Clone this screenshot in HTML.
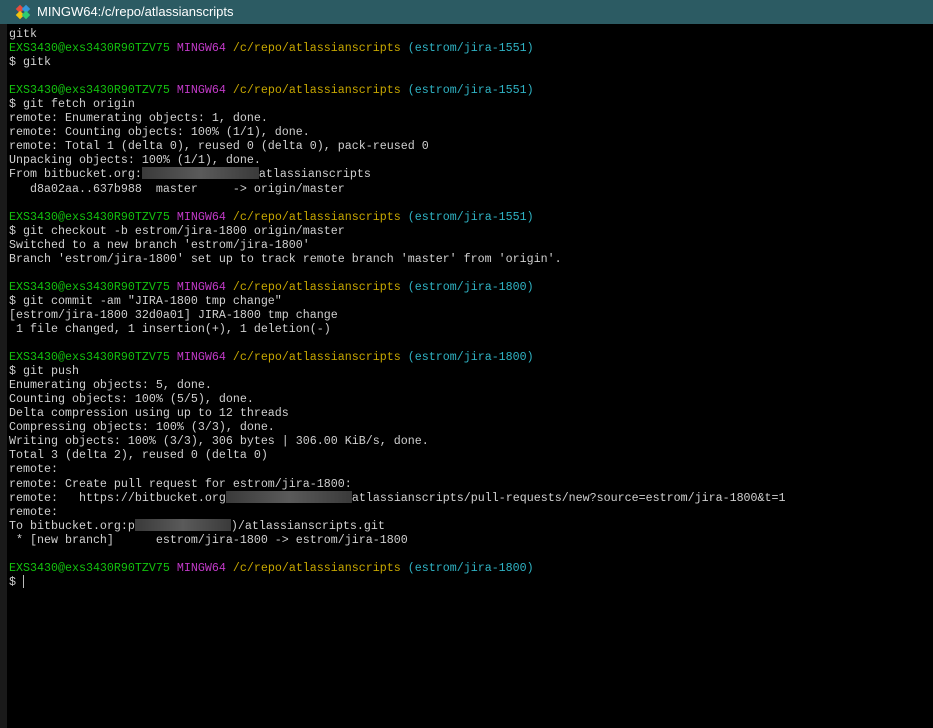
<!DOCTYPE html>
<html><head><meta charset="utf-8"><style>
html,body{margin:0;padding:0;width:933px;height:728px;background:#000;overflow:hidden}
#title{position:absolute;left:0;top:0;width:933px;height:24px;background:#2c5b63;color:#fff;font:13px "Liberation Sans",sans-serif}
#title span{position:absolute;left:37px;top:4px}
#strip{position:absolute;left:0;top:24px;width:7px;height:704px;background:#1a1a1a}
#term{position:absolute;left:9px;top:27px;font:11.67px/14.05px "Liberation Mono",monospace;color:#d0d0d0;white-space:pre}
.g{color:#13c20e}.m{color:#c23ac8}.y{color:#c7a700}.c{color:#2fb3c4}
.b{display:inline-block;height:12px;vertical-align:-2px;background:linear-gradient(90deg,#3a3a3a,#5a5a5a 50%,#3a3a3a)}
.cur{display:inline-block;width:1px;height:13px;background:#bbb;vertical-align:-3px}
</style></head><body>
<div id="title"><svg style="position:absolute;left:14px;top:3px" width="18" height="18" viewBox="0 0 18 18"><rect x="3" y="3" width="6" height="6" fill="#e74c3c" transform="rotate(45 6 6)"/><rect x="9" y="3" width="6" height="6" fill="#3498db" transform="rotate(45 12 6)"/><rect x="3" y="9" width="6" height="6" fill="#f1c40f" transform="rotate(45 6 12)"/><rect x="9" y="9" width="6" height="6" fill="#2ecc71" transform="rotate(45 12 12)"/></svg><span>MINGW64:/c/repo/atlassianscripts</span></div>
<div id="strip"></div>
<div id="term">gitk
<span class="g">EXS3430@exs3430R90TZV75</span> <span class="m">MINGW64</span> <span class="y">/c/repo/atlassianscripts</span> <span class="c">(estrom/jira-1551)</span>
$ gitk

<span class="g">EXS3430@exs3430R90TZV75</span> <span class="m">MINGW64</span> <span class="y">/c/repo/atlassianscripts</span> <span class="c">(estrom/jira-1551)</span>
$ git fetch origin
remote: Enumerating objects: 1, done.
remote: Counting objects: 100% (1/1), done.
remote: Total 1 (delta 0), reused 0 (delta 0), pack-reused 0
Unpacking objects: 100% (1/1), done.
From bitbucket.org:<span class="b" style="width:117px"></span>atlassianscripts
   d8a02aa..637b988  master     -&gt; origin/master

<span class="g">EXS3430@exs3430R90TZV75</span> <span class="m">MINGW64</span> <span class="y">/c/repo/atlassianscripts</span> <span class="c">(estrom/jira-1551)</span>
$ git checkout -b estrom/jira-1800 origin/master
Switched to a new branch 'estrom/jira-1800'
Branch 'estrom/jira-1800' set up to track remote branch 'master' from 'origin'.

<span class="g">EXS3430@exs3430R90TZV75</span> <span class="m">MINGW64</span> <span class="y">/c/repo/atlassianscripts</span> <span class="c">(estrom/jira-1800)</span>
$ git commit -am "JIRA-1800 tmp change"
[estrom/jira-1800 32d0a01] JIRA-1800 tmp change
 1 file changed, 1 insertion(+), 1 deletion(-)

<span class="g">EXS3430@exs3430R90TZV75</span> <span class="m">MINGW64</span> <span class="y">/c/repo/atlassianscripts</span> <span class="c">(estrom/jira-1800)</span>
$ git push
Enumerating objects: 5, done.
Counting objects: 100% (5/5), done.
Delta compression using up to 12 threads
Compressing objects: 100% (3/3), done.
Writing objects: 100% (3/3), 306 bytes | 306.00 KiB/s, done.
Total 3 (delta 2), reused 0 (delta 0)
remote:
remote: Create pull request for estrom/jira-1800:
remote:   https://bitbucket.org<span class="b" style="width:126px"></span>atlassianscripts/pull-requests/new?source=estrom/jira-1800&amp;t=1
remote:
To bitbucket.org:p<span class="b" style="width:96px"></span>)/atlassianscripts.git
 * [new branch]      estrom/jira-1800 -&gt; estrom/jira-1800

<span class="g">EXS3430@exs3430R90TZV75</span> <span class="m">MINGW64</span> <span class="y">/c/repo/atlassianscripts</span> <span class="c">(estrom/jira-1800)</span>
$ <span class="cur"></span></div>
</body></html>
